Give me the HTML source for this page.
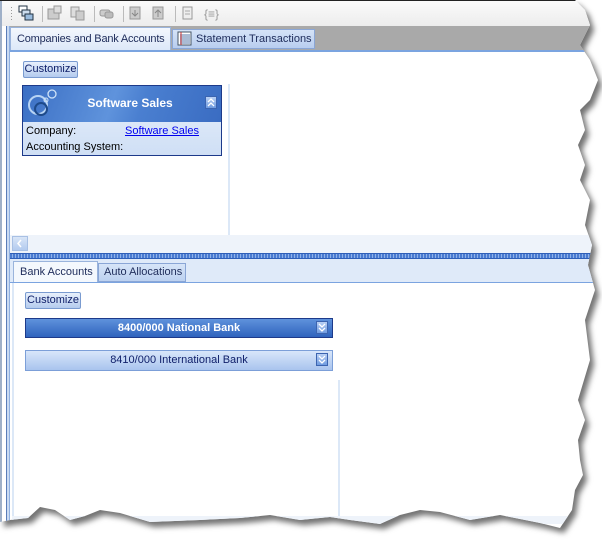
<!DOCTYPE html>
<html><head><meta charset="utf-8"><style>
*{margin:0;padding:0;box-sizing:border-box}
body{width:602px;height:543px;background:#fff;position:relative;overflow:hidden;font-family:"Liberation Sans",Tahoma,sans-serif;font-size:11px}
#wrap{position:absolute;left:0;top:0;width:602px;height:543px;filter:drop-shadow(4px 5px 3px rgba(0,0,0,.55))}
#pg{position:absolute;left:0;top:0;width:602px;height:543px;background:#fff;
clip-path:polygon(0 0,575px 0,585px 10px,590px 25px,580px 45px,590px 60px,598px 80px,590px 100px,580px 110px,585px 130px,578px 145px,585px 165px,580px 180px,590px 200px,585px 225px,592px 245px,588px 265px,595px 290px,585px 320px,590px 360px,578px 400px,585px 420px,578px 440px,580px 460px,583px 475px,575px 490px,572px 510px,560px 528px,540px 523px,500px 515px,470px 520px,440px 512px,420px 510px,400px 515px,380px 524px,350px 520px,330px 517px,300px 520px,270px 515px,240px 518px,200px 520px,150px 522px,120px 513px,100px 510px,85px 516px,70px 520px,55px 510px,40px 507px,28px 518px,10px 520px,0 522px)}
.abs{position:absolute}
.btn{position:absolute;border:1px solid #7a9bd0;border-radius:2px;background:linear-gradient(#e8f0fc,#b4cbee);color:#10206a;font-size:11px;line-height:15px;text-align:center;white-space:nowrap}
.tab{position:absolute;font-size:11px;color:#1e2c5a;line-height:20px;white-space:nowrap;overflow:hidden}
.chev{position:absolute;width:12px;height:13px;background:linear-gradient(#b9d0f4,#6f9be0);border:1px solid #3c64b0}
</style></head><body>
<div id="wrap"><div id="pg">
<div class="abs" style="left:0;top:0;width:602px;height:1px;background:#222"></div>
<div class="abs" style="left:0;top:1px;width:602px;height:25px;background:linear-gradient(#fafafa,#ececec)"></div>
<svg class="abs" style="left:0;top:1px" width="240" height="25">
<g fill="#999"><rect x="11" y="6" width="1" height="1"/><rect x="11" y="9" width="1" height="1"/><rect x="11" y="12" width="1" height="1"/><rect x="11" y="15" width="1" height="1"/><rect x="11" y="18" width="1" height="1"/></g>
<rect x="19" y="5" width="8" height="6" fill="#fff" stroke="#234"/><rect x="22" y="9" width="8" height="6" fill="#cde" stroke="#234"/><rect x="25" y="13" width="8" height="6" fill="#9bd" stroke="#234"/>
<g fill="#bbb"><rect x="42" y="5" width="1" height="16"/><rect x="94" y="5" width="1" height="16"/><rect x="123" y="5" width="1" height="16"/><rect x="175" y="5" width="1" height="16"/></g>
<rect x="48" y="8" width="11" height="10" fill="#ccc" stroke="#999"/><rect x="54" y="5" width="7" height="7" fill="#ddd" stroke="#999"/>
<rect x="71" y="6" width="8" height="10" fill="#ddd" stroke="#999"/><rect x="76" y="10" width="8" height="9" fill="#ccc" stroke="#999"/>
<rect x="100" y="9" width="10" height="6" fill="#ccc" stroke="#999" rx="2"/><rect x="105" y="11" width="8" height="6" fill="#bbb" stroke="#999" rx="2"/>
<rect x="130" y="6" width="10" height="12" fill="#ccc" stroke="#999"/><path d="M135 9v6M132 12l3 3 3-3" stroke="#888" fill="none"/>
<rect x="153" y="6" width="10" height="12" fill="#ccc" stroke="#999"/><path d="M158 16v-6M155 12l3-3 3 3" stroke="#888" fill="none"/>
<rect x="183" y="6" width="9" height="12" fill="#eee" stroke="#999"/><path d="M185 10h5M185 13h5" stroke="#aaa"/>
<text x="204" y="17" font-size="12" fill="#999" font-family="Liberation Sans">{≡}</text>
</svg>
<div class="abs" style="left:0;top:1px;width:2px;height:522px;background:#9fb0c8"></div>
<div class="abs" style="left:6px;top:26px;width:4px;height:496px;background:#c9daf2;border-left:1px solid #5a7db8;border-right:1px solid #8fb0e0"></div>
<div class="abs" style="left:10px;top:26px;width:592px;height:25px;background:#a9a9a9"></div>
<div class="tab" style="left:10px;top:27px;width:161px;height:24px;background:linear-gradient(#f3f7fd,#dbe7f8);border:1px solid #9ab4dc;border-bottom:none;padding-left:6px;line-height:22px;letter-spacing:-0.2px">Companies and Bank Accounts</div>
<div class="tab" style="left:172px;top:29px;width:143px;height:20px;background:linear-gradient(#d5e3f7,#b8cdef);border:1px solid #8aa6d6;padding-left:23px;line-height:18px">Statement Transactions</div>
<svg class="abs" style="left:177px;top:31px" width="15" height="15"><rect x="1" y="1" width="13" height="13" fill="#fff" stroke="#456"/><path d="M3 4h10M3 6h10M3 8h10M3 10h10M3 12h10" stroke="#57a"/><path d="M4 1v13" stroke="#c33"/></svg>
<div class="abs" style="left:10px;top:50px;width:592px;height:2px;background:#7ba4e0"></div>
<div class="btn" style="left:23px;top:61px;width:55px;height:17px">Customize</div>
<div class="abs" style="left:228px;top:84px;width:2px;height:151px;background:#dce8f7"></div>
<div class="abs" style="left:22px;top:85px;width:200px;height:71px;border:1px solid #1d3a8a;background:linear-gradient(#e8f0fb,#cfdff5)"></div>
<div class="abs" style="left:23px;top:86px;width:198px;height:36px;background:linear-gradient(110deg,#3b6fc4 0%,#5f93dc 45%,#4a7fd0 60%,#3a6cc2 100%)"></div>
<svg class="abs" style="left:24px;top:86px" width="40" height="36"><circle cx="14" cy="19" r="9" fill="none" stroke="#b8d4f4" stroke-width="2"/><circle cx="17" cy="23" r="6" fill="none" stroke="#1e4a8a" stroke-width="2"/><circle cx="28" cy="8" r="4" fill="none" stroke="#cfe3f8" stroke-width="1.3"/><circle cx="22" cy="14" r="2" fill="none" stroke="#cfe3f8"/></svg>
<div class="abs" style="left:70px;top:96px;width:120px;text-align:center;color:#fff;font-weight:bold;font-size:12px">Software Sales</div>
<div class="chev" style="left:205px;top:96px"><svg width="10" height="11" style="display:block"><path d="M2 5l3-3 3 3M2 9l3-3 3 3" stroke="#fff" stroke-width="1.3" fill="none"/></svg></div>
<div class="abs" style="left:26px;top:125px;color:#000">Company:</div>
<div class="abs" style="left:125px;top:125px;color:#0000ee;text-decoration:underline">Software Sales</div>
<div class="abs" style="left:26px;top:141px;color:#000">Accounting System:</div>
<div class="abs" style="left:10px;top:235px;width:592px;height:18px;background:#eef3fa"></div>
<div class="abs" style="left:12px;top:236px;width:16px;height:15px;background:linear-gradient(#d8e5f7,#b3cbef);border:1px solid #a8c0e4"><svg width="14" height="13" style="display:block"><path d="M8 3l-3 3.5 3 3.5" stroke="#fff" stroke-width="1.5" fill="none"/></svg></div>
<div class="abs" style="left:10px;top:253px;width:592px;height:6px;background:repeating-linear-gradient(90deg,#4a7bd0 0 2px,#8fb2ea 2px 3px);border-top:1px solid #2f5fb8;border-bottom:1px solid #2f5fb8"></div>
<div class="abs" style="left:10px;top:259px;width:592px;height:24px;background:#dfeaf9"></div>
<div class="tab" style="left:13px;top:261px;width:85px;height:22px;background:#f4f8fd;border:1px solid #9ab4dc;border-bottom:none;padding-left:6px">Bank Accounts</div>
<div class="tab" style="left:98px;top:263px;width:88px;height:19px;background:linear-gradient(#d7e5f8,#bcd1f0);border:1px solid #8aa6d6;padding-left:5px;line-height:17px">Auto Allocations</div>
<div class="abs" style="left:10px;top:282px;width:592px;height:1px;background:#7ba4e0"></div>
<div class="abs" style="left:12px;top:283px;width:2px;height:240px;background:#dce8f7"></div>
<div class="btn" style="left:25px;top:292px;width:56px;height:17px">Customize</div>
<div class="abs" style="left:25px;top:318px;width:308px;height:20px;background:linear-gradient(#5f92dc,#2f63bd);border:1px solid #1d3a8a;color:#fff;font-weight:bold;text-align:center;line-height:18px">8400/000 National Bank</div>
<div class="chev" style="left:316px;top:321px"><svg width="10" height="11" style="display:block"><path d="M2 2l3 3 3-3M2 6l3 3 3-3" stroke="#fff" stroke-width="1.3" fill="none"/></svg></div>
<div class="abs" style="left:25px;top:350px;width:308px;height:21px;background:linear-gradient(#d8e6fa,#a9c4ee);border:1px solid #7c9fd8;color:#10206a;text-align:center;line-height:19px">8410/000 International Bank</div>
<div class="chev" style="left:316px;top:353px"><svg width="10" height="11" style="display:block"><path d="M2 2l3 3 3-3M2 6l3 3 3-3" stroke="#fff" stroke-width="1.3" fill="none"/></svg></div>
<div class="abs" style="left:338px;top:380px;width:2px;height:140px;background:#dce8f7"></div>
<div class="abs" style="left:12px;top:516px;width:590px;height:8px;background:#eef3fa"></div>
</div></div>
</body></html>
